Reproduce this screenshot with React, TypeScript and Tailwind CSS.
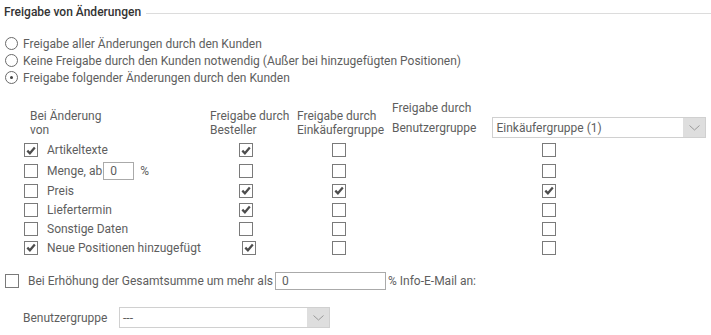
import React from 'react';

const Box = ({ checked = false, className = '' }: { checked?: boolean; className?: string }) => (
    <span className={`flex h-[14px] w-[14px] shrink-0 items-center justify-center border border-[#7a7a7a] bg-white ${className}`}>
        {checked && (
            <svg width="10" height="9" viewBox="0 0 10 9">
                <path d="M1.3 4.6 L3.9 7.2 L8.8 1.6" fill="none" stroke="#4d4d4d" strokeWidth="2.3" />
            </svg>
        )}
    </span>
);

const Radio = ({ checked = false, label }: { checked?: boolean; label: string }) => (
    <div className="flex h-[17px] items-center gap-[5px]">
        <span className="flex h-[13px] w-[13px] items-center justify-center rounded-full border border-[#6a6a6a]">
            {checked && <span className="h-[3px] w-[3px] rounded-full bg-[#444]" />}
        </span>
        <span>{label}</span>
    </div>
);

const Select = ({ value, className = '' }: { value: string; className?: string }) => (
    <div className={`flex h-[21px] items-stretch border border-[#d0d0d0] bg-white ${className}`}>
        <span className="flex flex-1 items-center pl-[3px]">{value}</span>
        <span className="flex w-[22px] items-center justify-center bg-[#dedede]">
            <svg width="11" height="6" viewBox="0 0 11 6">
                <path d="M0.5 0.5 L5.5 5 L10.5 0.5" fill="none" stroke="#9a9a9a" strokeWidth="1" />
            </svg>
        </span>
    </div>
);

const rows = [
    { label: 'Artikeltexte', h: 'h-[20px]', own: true, best: true, eink: false, ben: false },
    { label: 'Menge', h: 'h-[21px]', own: false, best: false, eink: false, ben: false },
    { label: 'Preis', h: 'h-[19px]', own: false, best: true, eink: true, ben: true },
    { label: 'Liefertermin', h: 'h-[19px]', own: false, best: true, eink: false, ben: false },
    { label: 'Sonstige Daten', h: 'h-[19px]', own: false, best: false, eink: false, ben: false },
    { label: 'Neue Positionen hinzugefügt', h: 'h-[19px]', own: true, best: true, eink: false, ben: false },
];

export default function App() {
    return (
        <div className="h-[335px] w-[711px] overflow-hidden bg-white font-['Roboto',sans-serif] text-[12px] leading-[14px] text-[#5e5e5e]">
            {/* Titel */}
            <div className="flex items-center pl-[4px] pt-[5px]">
                <span className="font-medium text-[#333]">Freigabe von Änderungen</span>
                <div className="ml-[5px] mt-[3px] h-px flex-1 bg-[#dcdcdc]" />
            </div>

            {/* Optionen */}
            <div className="mt-[16px] flex flex-col pl-[5px]">
                <Radio label="Freigabe aller Änderungen durch den Kunden" />
                <Radio label="Keine Freigabe durch den Kunden notwendig (Außer bei hinzugefügten Positionen)" />
                <Radio checked label="Freigabe folgender Änderungen durch den Kunden" />
            </div>

            {/* Tabellenkopf */}
            <div className="mt-[15px] flex h-[37px] items-end pl-[30px]">
                <div className="mb-[1px] w-[180px]">
                    <div>Bei Änderung</div>
                    <div>von</div>
                </div>
                <div className="mb-[1px] w-[87px]">
                    <div>Freigabe durch</div>
                    <div>Besteller</div>
                </div>
                <div className="mb-[1px] w-[95px]">
                    <div>Freigabe durch</div>
                    <div>Einkäufergruppe</div>
                </div>
                <div>
                    <div>Freigabe durch</div>
                    <div className="mt-[2px] flex items-center">
                        <span>Benutzergruppe</span>
                        <Select value="Einkäufergruppe (1)" className="ml-[16px] w-[214px]" />
                    </div>
                </div>
            </div>

            {/* Tabellenzeilen */}
            <div className="mt-[2px] flex flex-col pl-[24px]">
                {rows.map((row, index) => (
                    <div key={index} className={`flex items-center ${row.h}`}>
                        <div className="flex w-[215px] items-center">
                            <Box checked={row.own} />
                            {row.label === 'Menge' ? (
                                <span className="ml-[9px] flex items-center">
                                    Menge, ab
                                    <span className="ml-[1px] flex h-[18px] w-[31px] items-center border border-[#aaa] pl-[6px]">0</span>
                                    <span className="ml-[6px]">%</span>
                                </span>
                            ) : (
                                <span className="ml-[9px]">{row.label}</span>
                            )}
                        </div>
                        <div className="w-[93px]">
                            <Box checked={row.best} className={index === rows.length - 1 ? 'ml-[3px]' : ''} />
                        </div>
                        <div className="w-[210px]">
                            <Box checked={row.eink} />
                        </div>
                        <Box checked={row.ben} />
                    </div>
                ))}
            </div>

            {/* Gesamtsumme */}
            <div className="mt-[14px] flex h-[20px] items-center pl-[5px]">
                <Box />
                <span className="ml-[9px]">Bei Erhöhung der Gesamtsumme um mehr als</span>
                <span className="ml-[2px] flex h-[18px] w-[111px] items-center border border-[#aaa] pl-[6px]">0</span>
                <span className="ml-[2px]">% Info-E-Mail an:</span>
            </div>

            <div className="mt-[16px] flex h-[21px] items-center pl-[23px]">
                <span className="w-[96px]">Benutzergruppe</span>
                <Select value="---" className="w-[211px]" />
            </div>
        </div>
    );
}
